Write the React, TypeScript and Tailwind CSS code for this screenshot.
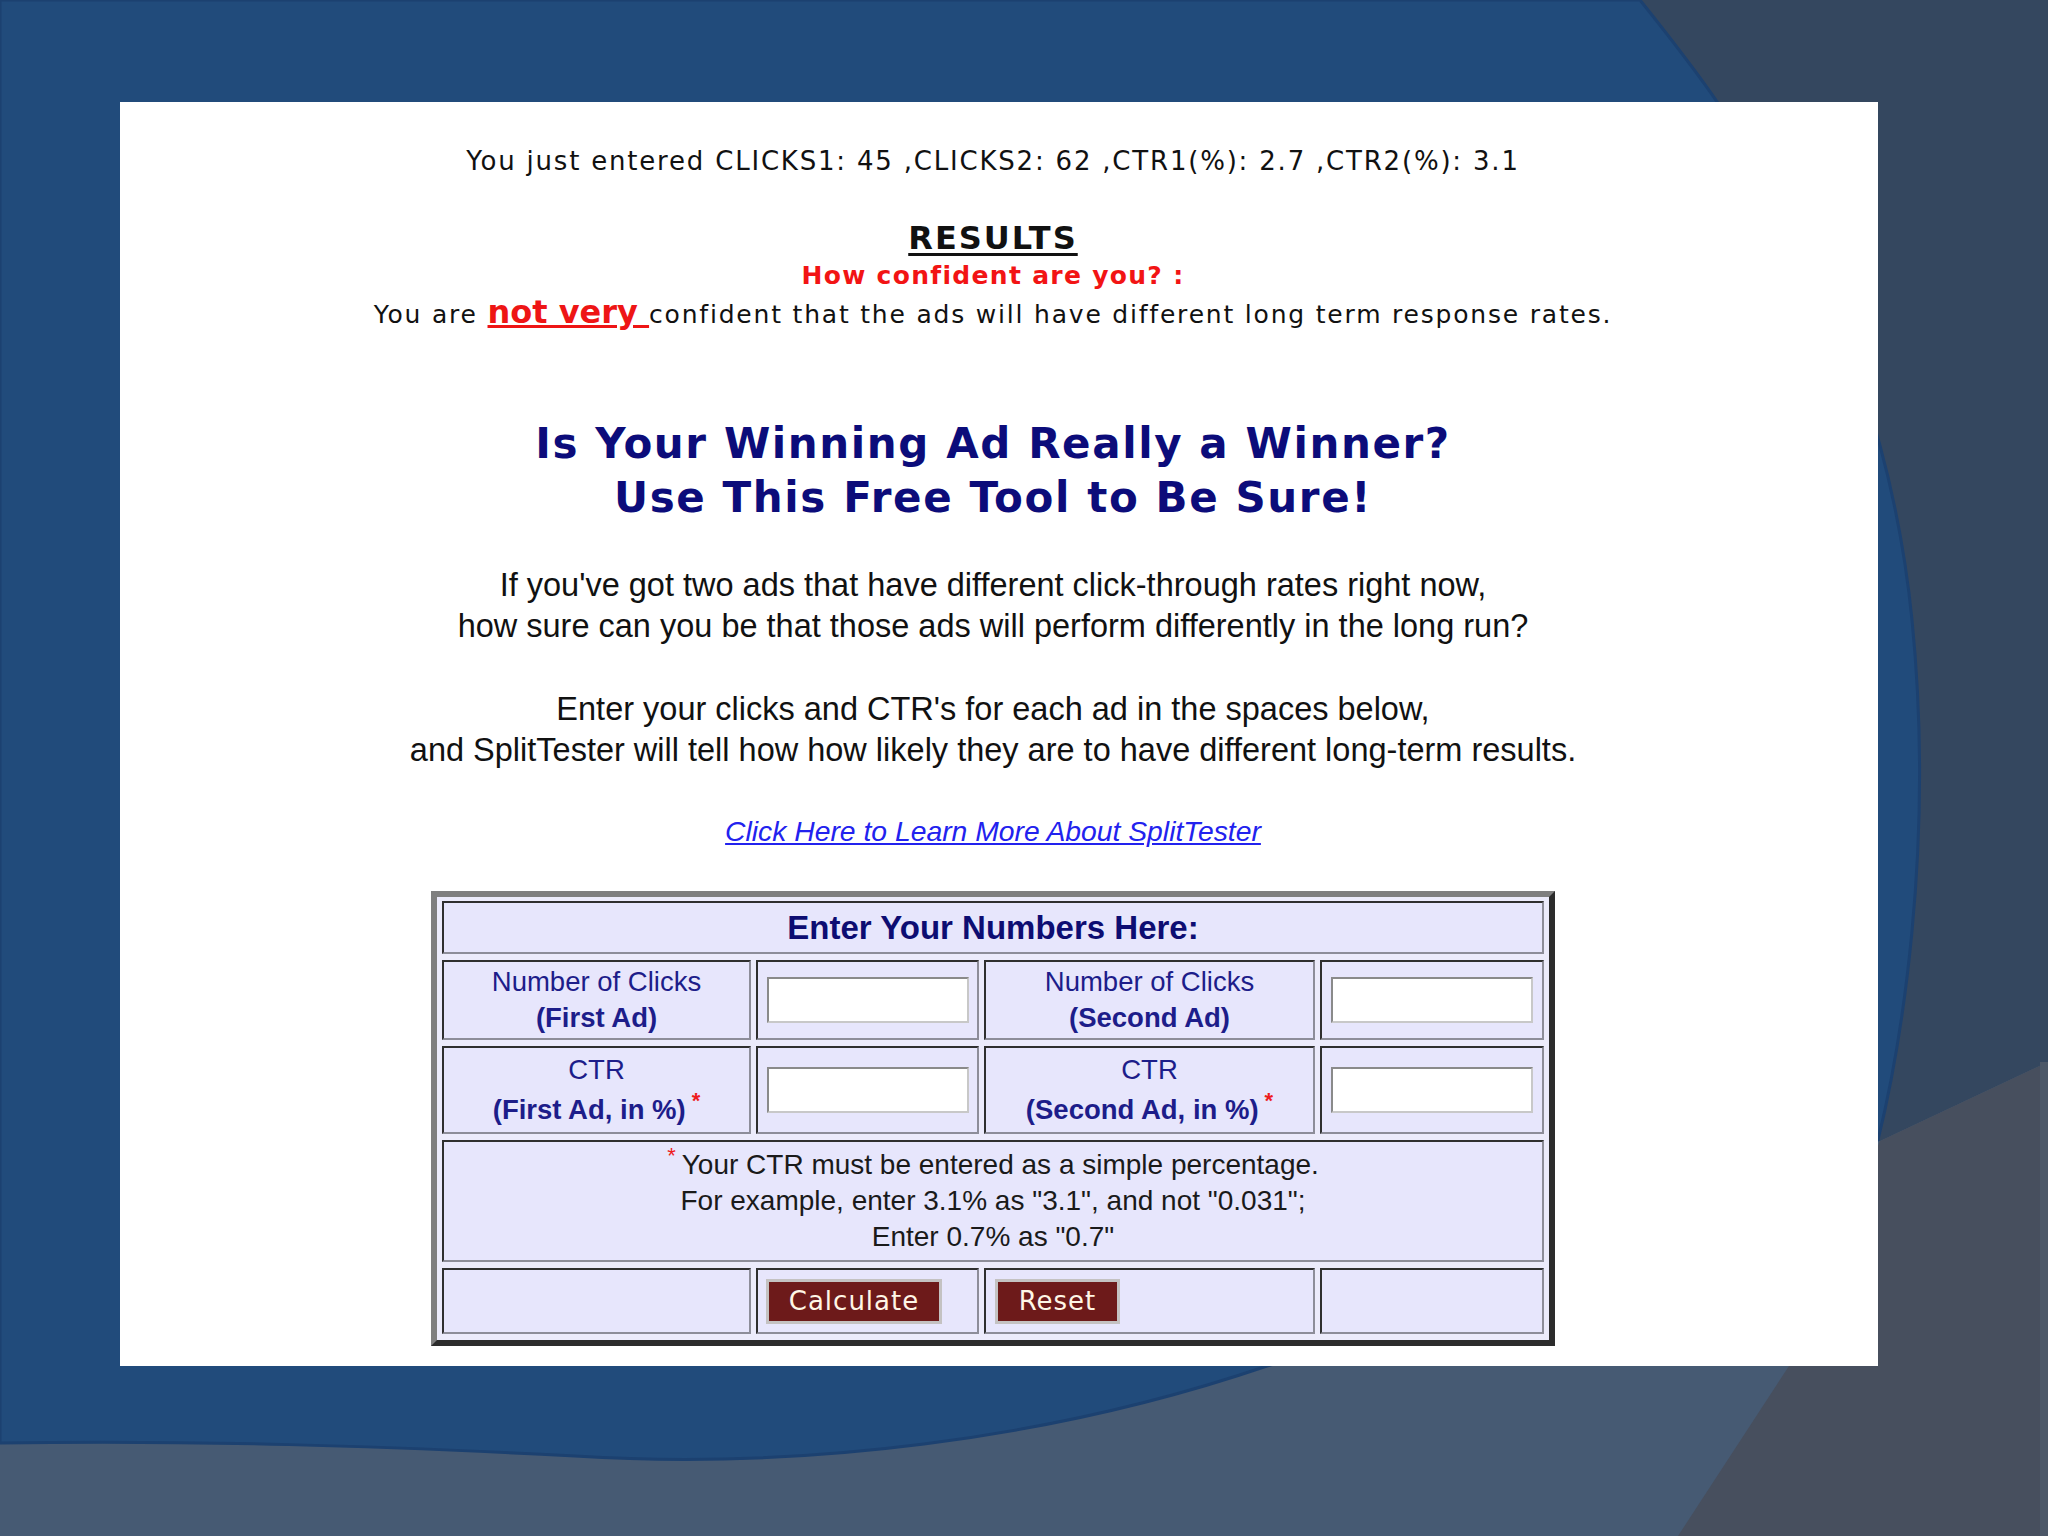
import React from "react";

const tahoma = "font-['DejaVu_Sans',sans-serif]";
const arial = "font-['Liberation_Sans',Arial,sans-serif]";

const Background = () => (
  <svg
    className="absolute inset-0"
    width="2048"
    height="1536"
    viewBox="0 0 2048 1536"
    preserveAspectRatio="none"
  >
    <rect x="0" y="0" width="2048" height="1536" fill="#465a73" />
    <polygon points="1500,0 2048,0 2048,1062 1880,1141 1500,1141" fill="#34475f" />
    <polygon points="2048,1062 1880,1141 1789,1366 1678,1536 2048,1536" fill="#474f5e" />
    <rect x="2040" y="1062" width="8" height="474" fill="#4c5868" />
    <path
      d="M0,0 L1640,0 C1720,100 1880,300 1912,620 C1935,850 1900,1050 1878,1140 L1500,1300 L1267,1366 C1050,1440 800,1470 575,1456 C380,1446 200,1440 0,1443 Z"
      fill="#214b7b"
      stroke="#1c4170"
      strokeWidth="3"
    />
  </svg>
);

const Cell = ({ children, className = "" }: { children?: React.ReactNode; className?: string }) => (
  <div
    className={
      "flex flex-col items-center justify-center border-2 border-t-[#2f2f2f] border-l-[#2f2f2f] border-b-[#8d8d99] border-r-[#8d8d99] bg-[#e7e6fc] " +
      className
    }
  >
    {children}
  </div>
);

const Field = () => (
  <input
    type="text"
    className="h-[46px] w-[202px] border-2 border-t-[#8a8a8a] border-l-[#8a8a8a] border-b-[#c8c8c8] border-r-[#c8c8c8] bg-white outline-none"
  />
);

const Star = () => <sup className="ml-[6px] text-[22px] text-[#ee1c1c]">*</sup>;

export default function App() {
  return (
    <div className="relative h-[1536px] w-[2048px] overflow-hidden">
      <Background />
      <div className="relative pl-[120px] pt-[102px]">
        <div className="flex h-[1264px] w-[1758px] flex-col items-center bg-white pr-[12px] pt-[44px]">
          <p className={`${tahoma} text-[26px] leading-[30px] tracking-[1.8px] text-[#111]`}>
            You just entered CLICKS1: 45 ,CLICKS2: 62 ,CTR1(%): 2.7 ,CTR2(%): 3.1
          </p>

          <div className={`${tahoma} mt-[44px] flex flex-col items-center text-center`}>
            <p className="h-[37px] text-[32px] font-bold leading-[37px] tracking-[2px] text-[#111] underline underline-offset-4">
              RESULTS
            </p>
            <p className="h-[37px] text-[25px] font-bold leading-[37px] tracking-[1.3px] text-[#f21414]">
              How confident are you? :
            </p>
            <p className="h-[37px] text-[25px] leading-[37px] tracking-[1.8px] text-[#111]">
              You are{" "}
              <span className="text-[32px] font-bold tracking-normal text-[#ee1515] underline">not very </span>
              confident that the ads will have different long term response rates.
            </p>
          </div>

          <h1
            className={`${tahoma} mt-[86px] text-center text-[42px] font-bold leading-[54px] tracking-[1.6px] text-[#0c0c7a]`}
          >
            Is Your Winning Ad Really a Winner?
            <br />
            Use This Free Tool to Be Sure!
          </h1>

          <p className={`${arial} mt-[40px] text-center text-[32.5px] leading-[41px] text-[#111]`}>
            If you've got two ads that have different click-through rates right now,
            <br />
            how sure can you be that those ads will perform differently in the long run?
          </p>

          <p className={`${arial} mt-[42px] text-center text-[32.5px] leading-[41px] text-[#111]`}>
            Enter your clicks and CTR's for each ad in the spaces below,
            <br />
            and SplitTester will tell how how likely they are to have different long-term results.
          </p>

          <a
            href="#"
            className={`${arial} mt-[40px] text-[28.3px] italic leading-[41px] text-[#2222ee] underline`}
          >
            Click Here to Learn More About SplitTester
          </a>

          <div className="mt-[39px] border-[6px] border-t-[#7f7f7f] border-l-[#7f7f7f] border-b-[#2c2c2c] border-r-[#2c2c2c] bg-[#ecebfb] px-[5px] pb-[6px] pt-[4px]">
            <div
              className={`${arial} grid grid-cols-[309px_223px_331px_224px] grid-rows-[53px_80px_88px_122px_66px] gap-x-[5px] gap-y-[6px]`}
            >
              <Cell className="col-span-4">
                <span className="text-[33px] font-bold text-[#0d0d72]">Enter Your Numbers Here:</span>
              </Cell>

              <Cell className="text-[27.5px] leading-[36px] text-[#1d1d8a]">
                <span>Number of Clicks</span>
                <span className="font-bold">(First Ad)</span>
              </Cell>
              <Cell>
                <Field />
              </Cell>
              <Cell className="text-[27.5px] leading-[36px] text-[#1d1d8a]">
                <span>Number of Clicks</span>
                <span className="font-bold">(Second Ad)</span>
              </Cell>
              <Cell>
                <Field />
              </Cell>

              <Cell className="text-[27.5px] leading-[40px] text-[#1d1d8a]">
                <span>CTR</span>
                <span className="font-bold">
                  (First Ad, in %)
                  <Star />
                </span>
              </Cell>
              <Cell>
                <Field />
              </Cell>
              <Cell className="text-[27.5px] leading-[40px] text-[#1d1d8a]">
                <span>CTR</span>
                <span className="font-bold">
                  (Second Ad, in %)
                  <Star />
                </span>
              </Cell>
              <Cell>
                <Field />
              </Cell>

              <Cell className="col-span-4 text-[28px] leading-[36px] text-[#1a1a1a]">
                <span>
                  <sup className="mr-[6px] text-[22px] text-[#ee1c1c]">*</sup>Your CTR must be entered as a simple percentage.
                </span>
                <span>For example, enter 3.1% as "3.1", and not "0.031";</span>
                <span>Enter 0.7% as "0.7"</span>
              </Cell>

              <Cell />
              <Cell className="items-start pl-[8px]">
                <button
                  className={`${tahoma} h-[45px] w-[176px] border-[3px] border-[#c4c2c2] bg-[#6d1a1a] text-[26px] tracking-[1px] text-[#fff6e6]`}
                >
                  Calculate
                </button>
              </Cell>
              <Cell className="items-start pl-[9px]">
                <button
                  className={`${tahoma} h-[45px] w-[125px] border-[3px] border-[#c4c2c2] bg-[#6d1a1a] text-[26px] tracking-[1px] text-[#fff6e6]`}
                >
                  Reset
                </button>
              </Cell>
              <Cell />
            </div>
          </div>
        </div>
      </div>
    </div>
  );
}
